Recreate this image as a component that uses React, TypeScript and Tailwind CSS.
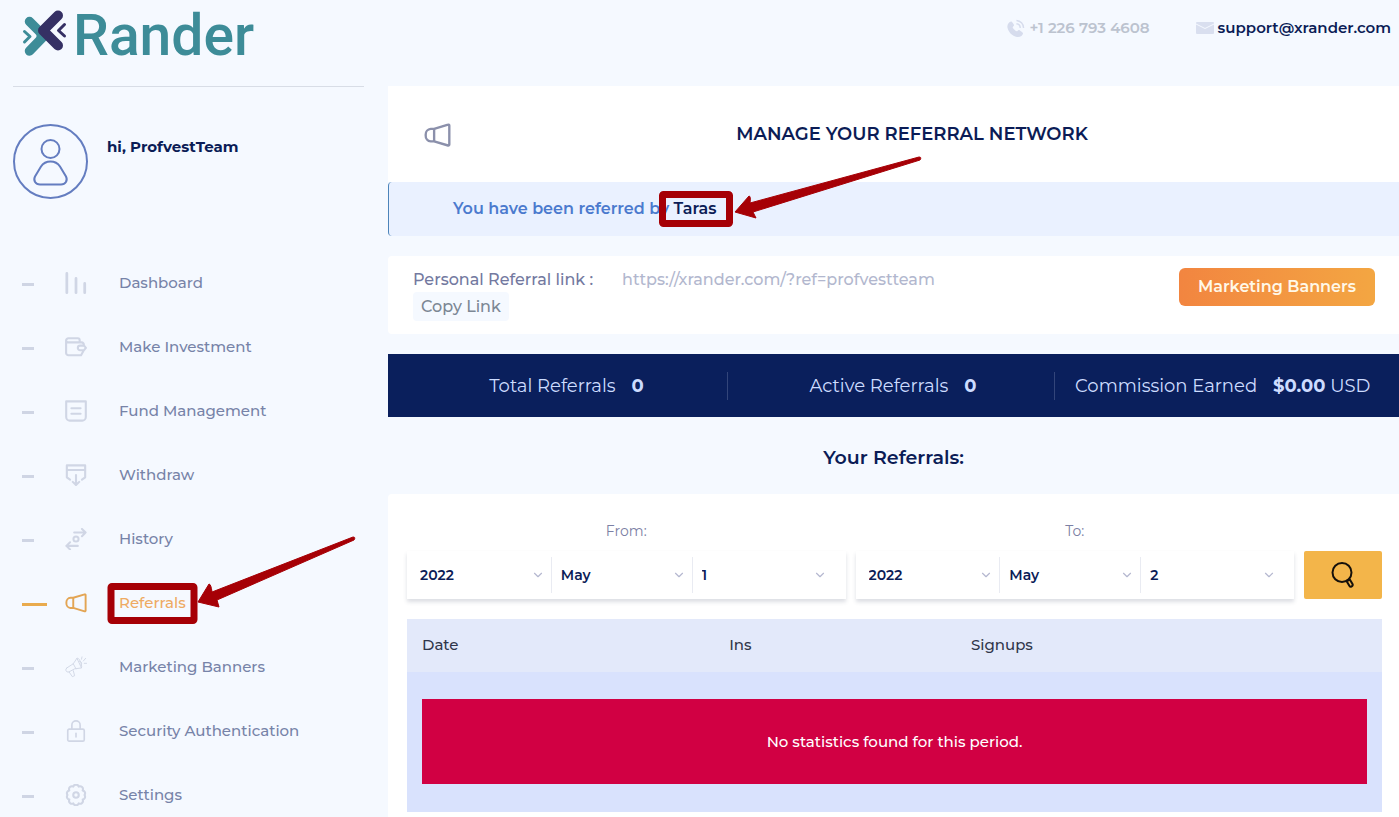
import type { ReactNode } from "react";
import { ChevronDown } from "lucide-react";

function MegaphoneIcon({ className }: { className: string }) {
  return (
    <svg
      viewBox="0 0 24 22"
      fill="none"
      stroke="currentColor"
      strokeWidth="2.1"
      strokeLinejoin="round"
      className={className}
    >
      <path d="M9 5.2 21.4 1.5c.6-.2 1.1.2 1.1.8v16.9c0 .6-.5 1-1.1.8L9 16.3H6A5 5 0 0 1 1.5 11v-.6A5 5 0 0 1 6 5.2Z" />
      <path d="M9 5.2v11.1" />
    </svg>
  );
}

function NavIcon({ children, width = 2.3 }: { children: ReactNode; width?: number }) {
  return (
    <svg
      viewBox="0 0 24 24"
      fill="none"
      stroke="currentColor"
      strokeWidth={width}
      strokeLinecap="round"
      strokeLinejoin="round"
      className="size-[22px]"
    >
      {children}
    </svg>
  );
}

const navItems = [
  {
    label: "Dashboard",
    icon: (
      <NavIcon width={3}>
        <path d="M2 1.5v21M12 7v15.5M21.5 12.5v10" />
      </NavIcon>
    ),
  },
  {
    label: "Make Investment",
    icon: (
      <NavIcon>
        <path d="M1.2 5v13.500a2.500 2.500 0 0 0 2.500 2.500H17.500l3-5.500M1.200 5A2.500 2.500 0 0 1 3.700 2.500H14a2 2 0 0 1 2 2v2M1.200 5a2 2 0 0 0 2 2H18a2.500 2.500 0 0 1 2.500 3M22.800 13l-2-2.500h-4.300a2.500 2.500 0 0 0 0 5h4.300Z" />
      </NavIcon>
    ),
  },
  {
    label: "Fund Management",
    icon: (
      <NavIcon>
        <path d="M1.300 1.500h21.400v17a4 4 0 0 1-4 4H5.300a4 4 0 0 1-4-4ZM7 9h10M7 15h10" />
      </NavIcon>
    ),
  },
  {
    label: "Withdraw",
    icon: (
      <NavIcon>
        <path d="M5.500 17 2 14.500V1.500h20v13L18.500 17M2 6.500h20M12 12v11M8.500 19.500l3.500 3.500 3.500-3.500" />
      </NavIcon>
    ),
  },
  {
    label: "History",
    icon: (
      <NavIcon width={2.2}>
        <path d="M10 5h12.500M18.500 1l4 4-4 4M14 19.500H1.500M5.500 15.500l-4 4 4 4" />
        <circle cx="12" cy="12" r="2.800" />
      </NavIcon>
    ),
  },
  { label: "Referrals", icon: <MegaphoneIcon className="w-[22px]" />, active: true },
  {
    label: "Marketing Banners",
    icon: (
      <NavIcon width={1}>
        <path d="m2 13 7-4.500 4-6 5 10.500-7.500 1-6.500 3.500a2.500 2.500 0 0 1-2-4.500ZM9 8.500l3 5.500M13 2.500c1.500-.8 2.500 1 3.500 3s2.500 6.500 1.500 7.500M4.500 17.500l3.500 5 2.500-1-1.500-5.500M16 6a2 2 0 0 1 1.500 3.500M18 3.500l.5-2.500M20 5.500l2.500-3M21 8h2.500" />
      </NavIcon>
    ),
  },
  {
    label: "Security Authentication",
    icon: (
      <NavIcon width={1.800}>
        <path d="M4.500 10h15a1.500 1.500 0 0 1 1.500 1.500v10a1.500 1.500 0 0 1-1.500 1.500h-15A1.500 1.500 0 0 1 3 21.500v-10A1.500 1.500 0 0 1 4.500 10ZM7.500 10V5.500a4.500 4.500 0 0 1 9 0V10M12 14.500v4" />
      </NavIcon>
    ),
  },
  {
    label: "Settings",
    icon: (
      <NavIcon>
        <path d="M9 2.800a3.200 3.200 0 0 1 6 0 3.200 3.200 0 0 1 4.300 4.200 3.200 3.200 0 0 1 2 5 3.200 3.200 0 0 1-2 5 3.200 3.200 0 0 1-4.300 4.200 3.200 3.200 0 0 1-6 0A3.200 3.200 0 0 1 4.700 17a3.200 3.200 0 0 1-2-5 3.200 3.200 0 0 1 2-5A3.200 3.200 0 0 1 9 2.800Z" />
        <circle cx="12" cy="12" r="3" />
      </NavIcon>
    ),
  },
];

const ranges = [
  { label: "From:", id: "from", day: "1" },
  { label: "To:", id: "to", day: "2" },
];

function DateSelect({
  label,
  value,
  options,
}: {
  label: string;
  value: string;
  options: string[];
}) {
  return (
    <div className="relative h-9 border-r border-[#e9ebf2] last:border-r-0">
      <select
        aria-label={label}
        defaultValue={value}
        className="w-full h-full appearance-none bg-transparent pl-[9px] pr-8 text-sm font-semibold text-[#0b1c56]"
      >
        {options.map((o) => (
          <option key={o}>{o}</option>
        ))}
      </select>
      <ChevronDown
        strokeWidth={2}
        className="absolute right-1.5 top-[11px] size-3.5 pointer-events-none text-[#b5b8d0]"
      />
    </div>
  );
}

function Sidebar() {
  return (
    <aside className="w-[388px] shrink-0 pl-[13px] pr-6">
      <a href="#" className="flex h-[87px] items-start border-b border-[#d8dde6]">
        <svg
          viewBox="0 0 48 52"
          fill="none"
          strokeLinecap="round"
          strokeLinejoin="round"
          className="mt-[8px] ml-[8px] w-12 shrink-0"
        >
          <path d="M8.500 13.500 23 28 8.500 43" stroke="#3d8c98" strokeWidth="9.500" />
          <path d="m18 24 8 4-8 5Z" fill="#3d8c98" stroke="#3d8c98" strokeWidth="5" />
          <path d="M37 7.500 22 22.500l15 15" stroke="#353064" strokeWidth="10" />
          <path d="m3.500 23.500 5.500 5-5.500 5.500" stroke="#f5f9ff" strokeWidth="6" />
          <path d="m3.500 23.500 5.500 5-5.500 5.500" stroke="#3d8c98" strokeWidth="3" />
          <path d="m43.500 16.500-6 6 6 5.500" stroke="#f5f9ff" strokeWidth="7" />
          <path d="m43.500 16.500-6 6 6 5.500" stroke="#353064" strokeWidth="3" />
        </svg>
        <span className="ml-1 mt-[6px] font-['Roboto',sans-serif] text-[57px] leading-[60px] font-medium text-[#3d8c98]">
          Rander
        </span>
      </a>

      <div className="mt-[37px] flex gap-[19px]">
        <svg viewBox="0 0 75 75" fill="none" stroke="#647dc0" strokeWidth="2" className="size-[75px]">
          <circle cx="37.500" cy="37.500" r="36.500" />
          <circle cx="37.500" cy="25" r="9" />
          <path d="M37.500 37.500c4.500 0 7.500 2 9.500 5l6 10c2 4-.5 8-5 8H27c-4.500 0-7-4-5-8l6-10c2-3 5-5 9.500-5Z" />
        </svg>
        <p className="mt-3 text-[15px] leading-[22px] font-bold text-[#0b1c56]">hi, ProfvestTeam</p>
      </div>

      <nav className="mt-[72px] flex flex-col gap-10">
        {navItems.map((item) => (
          <a
            key={item.label}
            href="#"
            className={`relative flex h-6 items-center pl-[9px] text-[15px] font-medium ${
              item.active ? "text-[#eeaa62]" : "text-[#7783a8]"
            }`}
          >
            <span
              className={`mt-[3px] h-[3px] ${item.active ? "w-[25px] bg-[#e9ab4e]" : "w-3 bg-[#cfd5e4]"}`}
            />
            <span
              className={`w-[54px] ${
                item.active ? "ml-[18px] text-[#e3a554]" : "ml-[31px] text-[#d0d6e5]"
              }`}
            >
              {item.icon}
            </span>
            {item.label}
            {item.active && (
              <svg
                viewBox="107 536 250 90"
                className="absolute -top-[55px] left-[94px] w-[250px] h-[90px] pointer-events-none"
                aria-hidden="true"
              >
                <rect x="111" y="586.500" width="83" height="34" rx="1" fill="none" stroke="#a60006" strokeWidth="7" strokeLinejoin="round" />
                <path d="M198 602 209 584q2 0 3 8L353 537q3 0 1 3L217 600l2 7Z" fill="#a60006" stroke="#a60006" strokeLinejoin="round" />
              </svg>
            )}
          </a>
        ))}
      </nav>
    </aside>
  );
}

export default function App() {
  return (
    <div className="flex min-h-screen bg-[#f5f9ff] font-['Montserrat','Inter',sans-serif] text-[#0b1c56]">
      <Sidebar />

      <main className="flex min-w-0 flex-1 flex-col">
        <header className="flex h-[86px] items-start justify-end gap-[46px] pt-4 pr-2 text-[15px] leading-6 font-semibold">
          <a href="tel:+12267934608" className="flex items-center gap-1 text-[#bcc3cf]">
            <svg viewBox="0 0 20 20" className="size-[19px] text-[#d6dced]">
              <path
                d="M5.500 2.500C3 3 1 5.500 1.500 9c1 5 5 9 10 10 3.500.5 6-1.500 6.500-4 0-.7-3.500-3.500-4.500-3.500-.8 0-1.500 1.500-2.300 1.500-1 0-4.200-3.200-4.200-4.200 0-.8 1.500-1.500 1.500-2.300 0-1-2.300-4-3-4Z"
                fill="currentColor"
              />
              <path d="M11 1.500a8 8 0 0 1 7.500 8M11 5a4.500 4.500 0 0 1 4 4.500" fill="none" stroke="currentColor" strokeWidth="1.500" />
            </svg>
            +1 226 793 4608
          </a>
          <a href="mailto:support@xrander.com" className="flex items-center gap-1">
            <svg viewBox="0 0 18 12" className="w-[18px]">
              <rect width="18" height="12" rx="1" fill="#d9dfef" />
              <path d="m0 2 9 4.500L18 2" fill="none" stroke="#f5f9ff" />
            </svg>
            support@xrander.com
          </a>
        </header>

        {/* Page title */}
        <section className="flex h-24 items-center bg-white pl-9">
          <MegaphoneIcon className="mt-[3px] w-[27px] shrink-0 text-[#8b90ab]" />
          <h1 className="flex-1 pr-[26px] text-center text-lg font-semibold">MANAGE YOUR REFERRAL NETWORK</h1>
        </section>
        <p className="flex h-[54px] items-center rounded-l-sm border-l border-[#4c84ba] bg-[#eaf1ff] pl-16 text-base font-semibold text-[#4b7ace]">
          You have been referred by&nbsp;
          <span className="relative text-[#0b1c56]">
            Taras
            <svg
              viewBox="659 155 264 74"
              className="absolute -top-[42px] -left-[15px] h-[74px] w-[264px] max-w-none pointer-events-none"
              aria-hidden="true"
            >
              <rect x="662.500" y="194.500" width="67" height="29" rx="1" fill="none" stroke="#a60006" strokeWidth="7" strokeLinejoin="round" />
              <path d="M735 212 749 196q2 0 1 7L919 157q3 0 1 3L753 212l3 6Z" fill="#a60006" stroke="#a60006" strokeLinejoin="round" />
            </svg>
          </span>
        </p>

        {/* Referral link */}
        <section className="mt-5 flex items-start justify-between rounded-l-sm bg-white pt-3 pb-[13px] pl-[25px] pr-6 font-medium">
          <div>
            <p className="flex gap-[29px] text-base leading-6">
              <span className="text-[#7379a0]">Personal Referral link :</span>
              <span className="text-[#b2b7ce]">https://xrander.com/?ref=profvestteam</span>
            </p>
            <button className="rounded-sm bg-[#f5f9ff] px-2 text-base leading-[29px] text-[#7c8794]">Copy Link</button>
          </div>
          <button className="h-[38px] rounded-md bg-linear-to-r from-[#f28540] to-[#f3a642] px-[19px] text-base font-semibold text-[#fff8e8]">
            Marketing Banners
          </button>
        </section>

        {/* Totals */}
        <section className="mt-5 grid h-[63px] grid-cols-[340fr_327fr_344fr] items-center bg-[#0a1f5c] text-lg text-[#cddcff]">
          <p className="flex justify-center gap-4 border-r border-[#33457a] pl-[18px]">
            Total Referrals <b>0</b>
          </p>
          <p className="flex justify-center gap-4 border-r border-[#33457a] pl-1">
            Active Referrals <b>0</b>
          </p>
          <p className="flex gap-4 pl-5">
            Commission Earned{" "}
            <span>
              <b>$0.00</b> USD
            </span>
          </p>
        </section>

        <h2 className="pt-[28px] pb-6 text-center text-[19px] leading-[25px] font-semibold">Your Referrals:</h2>

        <section className="flex-1 rounded-tl-sm bg-white pt-[26px] pl-[19px] pr-[17px]">
          <form className="flex items-end gap-2.5" onSubmit={(e) => e.preventDefault()}>
            {ranges.map((r) => (
              <fieldset key={r.id} className="min-w-0 flex-1">
                <legend className="mx-auto text-sm leading-[22px] text-[#7c80a4]">{r.label}</legend>
                <div className="mt-[9px] grid h-12 grid-cols-3 items-center bg-white pl-1 pr-3 shadow-[0_3px_4px_rgba(60,70,100,0.18)]">
                  <DateSelect label={`${r.label} year`} value="2022" options={["2021", "2022"]} />
                  <DateSelect label={`${r.label} month`} value="May" options={["April", "May", "June"]} />
                  <DateSelect label={`${r.label} day`} value={r.day} options={["1", "2", "3"]} />
                </div>
              </fieldset>
            ))}
            <button aria-label="Search" className="flex h-12 w-[78px] items-center justify-center rounded-xs bg-[#f3b54a] text-[#15100b]">
              <svg viewBox="0 0 24 28" fill="none" stroke="currentColor" className="w-6">
                <circle cx="11" cy="11.500" r="9.500" strokeWidth="2" />
                <path d="m15.500 20 3 5c.9 1.500 4 0 3-2l-3-5M16 20l3-1.500" strokeWidth="2" />
              </svg>
            </button>
          </form>

          <table className="mt-5 w-full table-fixed text-left">
            <thead className="bg-[#e3e9fa] text-[15px] text-[#30364a]">
              <tr className="h-[53px]">
                <th className="w-[31.5%] px-[15px] font-medium">Date</th>
                <th className="w-[24.8%] px-[15px] font-medium">Ins</th>
                <th className="px-[15px] font-medium">Signups</th>
              </tr>
            </thead>
            <tbody className="bg-[#d9e2fd]">
              <tr>
                <td colSpan={3} className="px-[15px] pt-[27px] pb-7">
                  <p className="bg-[#d10043] text-center text-[15px] leading-[85px] font-medium text-white">
                    No statistics found for this period.
                  </p>
                </td>
              </tr>
            </tbody>
          </table>
        </section>
      </main>
    </div>
  );
}
